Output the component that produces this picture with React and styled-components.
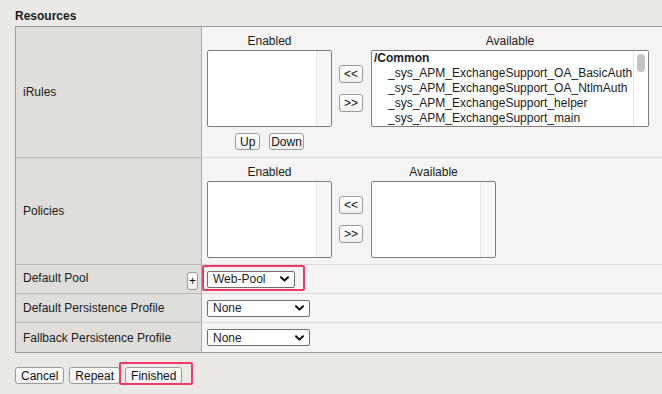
import React from "react";
import styled, { createGlobalStyle } from "styled-components";

const GlobalStyle = createGlobalStyle`
  body {
    margin: 0;
    background: #eae9e5;
    font-family: "Liberation Sans", Arial, sans-serif;
    font-size: 12px;
    color: #1b1b1b;
  }
  #root {
    overflow: hidden;
    height: 394px;
  }
`;

const Page = styled.div`
  padding: 9px 0 0 15px;
`;

const Heading = styled.div`
  font-weight: bold;
  line-height: 14px;
  margin-bottom: 3px;
`;

const Table = styled.div`
  display: grid;
  grid-template-columns: 186px 1fr;
  width: 660px;
  border: 1px solid #9c9c9c;
  border-right: none;
`;

const LabelCell = styled.div`
  box-sizing: border-box;
  display: flex;
  align-items: center;
  justify-content: space-between;
  background: #dfdedb;
  border-right: 1px solid #aaa9a6;
  border-bottom: ${(p) => (p.$last ? "none" : "1px solid #bcbbb8")};
  padding: 0 3px 0 7px;
  min-height: ${(p) => (p.$compact ? "29px" : "auto")};
`;

const LabelText = styled.span`
  margin-bottom: ${(p) => (p.$lift ? 3 : 0)}px;
`;

const ValueCell = styled.div`
  box-sizing: border-box;
  display: flex;
  align-items: ${(p) => (p.$compact ? "center" : "flex-start")};
  background: #f5f4f2;
  border-bottom: ${(p) => (p.$last ? "none" : "1px solid #d9d8d5")};
  padding: ${(p) => (p.$compact ? "0 5px" : `6px 5px ${p.$bottom || 6}px`)};
`;

const ListColumn = styled.div`
  display: flex;
  flex-direction: column;
  align-items: center;
`;

const ListTitle = styled.div`
  line-height: 16px;
  margin-bottom: 1px;
`;

const ListBox = styled.div`
  box-sizing: border-box;
  display: flex;
  width: ${(p) => p.$width}px;
  height: 77px;
  background: #fff;
  border: 1px solid #7d7d7d;
  border-radius: 2px;
  overflow: hidden;
`;

const ListItems = styled.div`
  flex: 1;
  padding: 0 2px;
  line-height: 15px;
  white-space: nowrap;
  overflow: hidden;
`;

const GroupName = styled.div`
  font-weight: bold;
`;

const Option = styled.div`
  padding-left: 14px;
`;

const ScrollTrack = styled.div`
  position: relative;
  width: 14px;
  flex: none;
  background: ${(p) => (p.$plain ? "#fff" : "#f7f7f7")};
  border-left: 1px solid #e5e5e5;
`;

const ScrollThumb = styled.div`
  position: absolute;
  top: 3px;
  left: 3px;
  width: 8px;
  height: 18px;
  border-radius: 4px;
  background: #c3c3c3;
`;

const Button = styled.button`
  box-sizing: border-box;
  height: ${(p) => p.$h || 17}px;
  min-width: ${(p) => p.$min || 0}px;
  margin-top: ${(p) => p.$drop || 0}px;
  padding: 0 ${(p) => (p.$pad == null ? 4 : p.$pad)}px;
  font-family: "Liberation Sans", Arial, sans-serif;
  font-size: 12px;
  line-height: 1;
  color: #111;
  background: linear-gradient(#ffffff, #f0f0f0);
  border: 1px solid #9b9b9b;
  border-radius: 3px;
`;

const OrderRow = styled.div`
  display: flex;
  gap: 9px;
  margin-top: 6px;
`;

const MoveColumn = styled.div`
  display: flex;
  flex-direction: column;
  gap: 11px;
  padding-top: 32px;
  margin: 0 8px 0 7px;
`;

const SelectWrap = styled.div`
  position: relative;
  display: inline-flex;
`;

const Select = styled.div`
  box-sizing: border-box;
  display: flex;
  align-items: center;
  justify-content: space-between;
  width: ${(p) => p.$width}px;
  height: 17px;
  padding: 0 5px;
  background: #fff;
  border: 1px solid #6f6f6f;
  border-radius: 2px;
`;

const Mark = styled.div`
  position: absolute;
  top: ${(p) => p.$t}px;
  left: ${(p) => p.$l}px;
  right: ${(p) => p.$r}px;
  bottom: ${(p) => p.$b}px;
  border: 2px solid #ef3a6c;
  border-radius: 2px;
  pointer-events: none;
`;

const Footer = styled.div`
  display: flex;
  gap: 5px;
  margin-top: 14px;
`;

const ButtonWrap = styled.div`
  position: relative;
  display: inline-flex;
`;

function Chevron() {
  return (
    <svg width="9" height="6" viewBox="0 0 9 6">
      <path
        d="M1 1.2 L4.5 4.6 L8 1.2"
        fill="none"
        stroke="#111"
        strokeWidth="2"
        strokeLinecap="round"
        strokeLinejoin="round"
      />
    </svg>
  );
}

function Dropdown({ value, width, children }) {
  return (
    <SelectWrap>
      <Select $width={width}>
        <span>{value}</span>
        <Chevron />
      </Select>
      {children}
    </SelectWrap>
  );
}

const AVAILABLE_RULES = [
  "_sys_APM_ExchangeSupport_OA_BasicAuth",
  "_sys_APM_ExchangeSupport_OA_NtlmAuth",
  "_sys_APM_ExchangeSupport_helper",
  "_sys_APM_ExchangeSupport_main",
];

function MoveButtons() {
  return (
    <MoveColumn>
      <Button $h={18}>&lt;&lt;</Button>
      <Button $h={18}>&gt;&gt;</Button>
    </MoveColumn>
  );
}

export default function App() {
  return (
    <>
      <GlobalStyle />
      <Page>
        <Heading>Resources</Heading>
        <Table>
          <LabelCell>iRules</LabelCell>
          <ValueCell $bottom={7}>
            <ListColumn>
              <ListTitle>Enabled</ListTitle>
              <ListBox $width={125}>
                <ListItems />
                <ScrollTrack />
              </ListBox>
              <OrderRow>
                <Button $min={25} $pad={1}>Up</Button>
                <Button $min={25} $pad={1}>Down</Button>
              </OrderRow>
            </ListColumn>
            <MoveButtons />
            <ListColumn>
              <ListTitle>Available</ListTitle>
              <ListBox $width={278}>
                <ListItems>
                  <GroupName>/Common</GroupName>
                  {AVAILABLE_RULES.map((r) => (
                    <Option key={r}>{r}</Option>
                  ))}
                </ListItems>
                <ScrollTrack $plain>
                  <ScrollThumb />
                </ScrollTrack>
              </ListBox>
            </ListColumn>
          </ValueCell>

          <LabelCell>Policies</LabelCell>
          <ValueCell $bottom={6}>
            <ListColumn>
              <ListTitle>Enabled</ListTitle>
              <ListBox $width={125}>
                <ListItems />
                <ScrollTrack />
              </ListBox>
            </ListColumn>
            <MoveButtons />
            <ListColumn>
              <ListTitle>Available</ListTitle>
              <ListBox $width={125}>
                <ListItems />
                <ScrollTrack />
              </ListBox>
            </ListColumn>
          </ValueCell>

          <LabelCell $compact>
            <LabelText $lift>Default Pool</LabelText>
            <Button $h={18} $pad={1} $drop={3}>+</Button>
          </LabelCell>
          <ValueCell $compact>
            <Dropdown value="Web-Pool" width={88}>
              <Mark $t={-6} $l={-5} $r={-10} $b={-3} />
            </Dropdown>
          </ValueCell>

          <LabelCell $compact>
            <LabelText>Default Persistence Profile</LabelText>
          </LabelCell>
          <ValueCell $compact>
            <Dropdown value="None" width={103} />
          </ValueCell>

          <LabelCell $compact $last>
            <LabelText>Fallback Persistence Profile</LabelText>
          </LabelCell>
          <ValueCell $compact $last>
            <Dropdown value="None" width={103} />
          </ValueCell>
        </Table>

        <Footer>
          <Button $pad={5}>Cancel</Button>
          <Button $pad={5}>Repeat</Button>
          <ButtonWrap>
            <Button $pad={5}>Finished</Button>
            <Mark $t={-5} $l={-6} $r={-11} $b={-1} />
          </ButtonWrap>
        </Footer>
      </Page>
    </>
  );
}
